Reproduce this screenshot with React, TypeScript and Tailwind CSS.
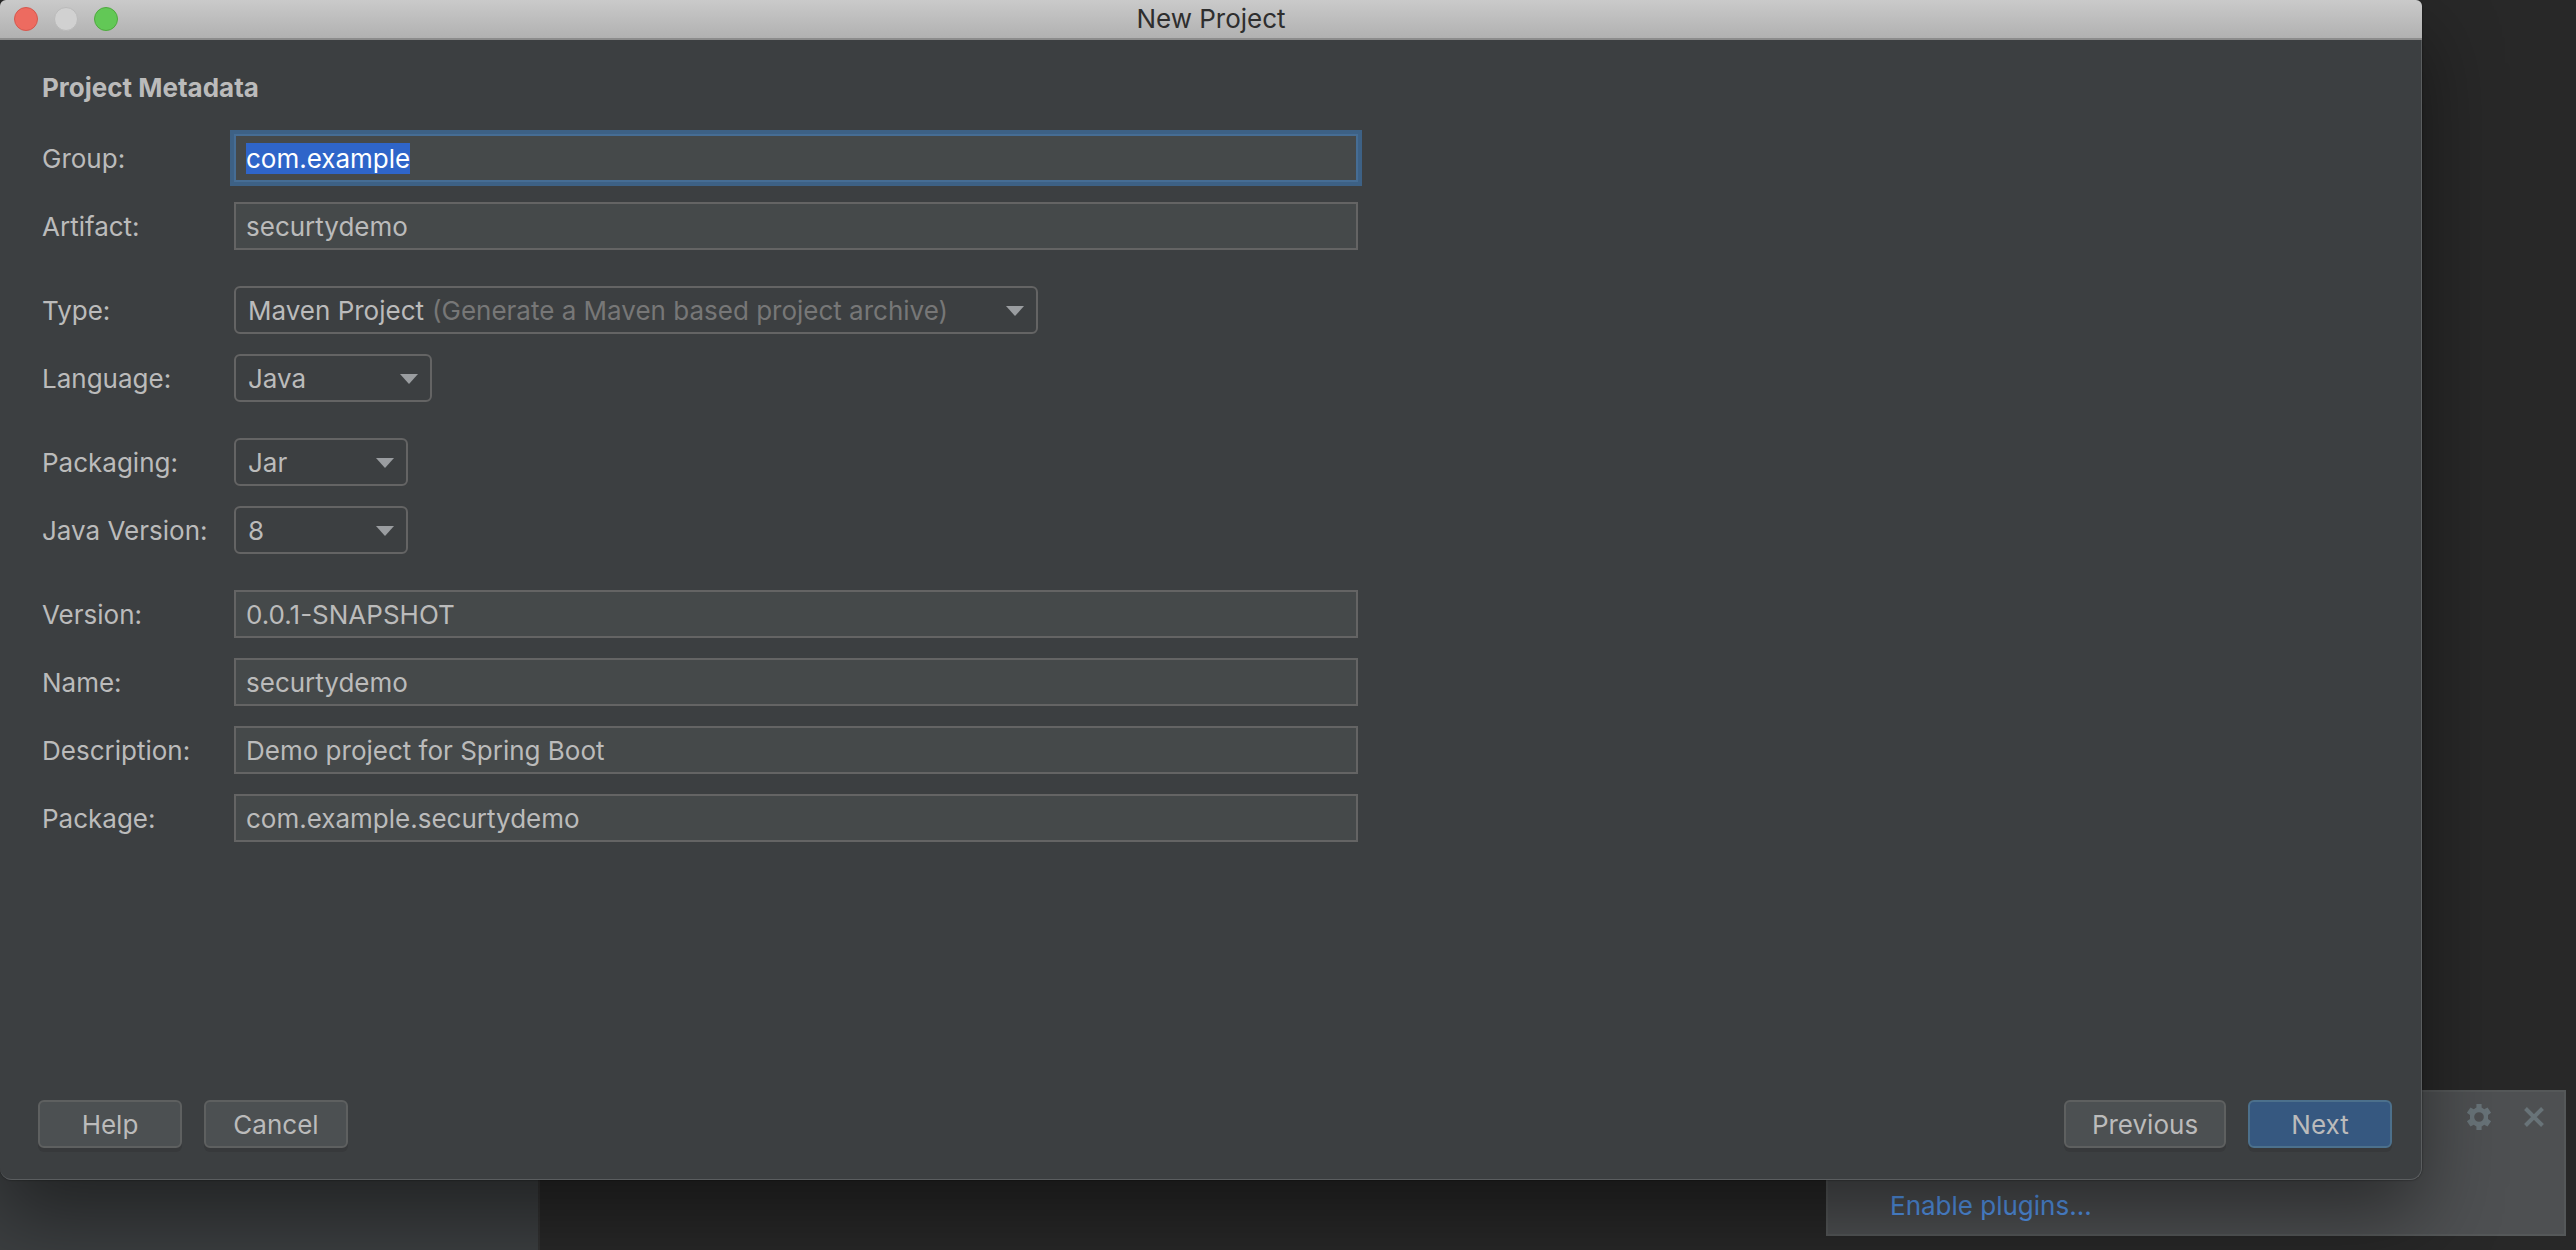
import { useEffect, useRef } from "react";
import type { ReactNode } from "react";

interface RowProps {
  id: string;
  label: string;
  children: ReactNode;
}

function Row({ id, label, children }: RowProps) {
  return (
    <div className="flex h-12 items-center">
      <label htmlFor={id} className="w-48 shrink-0 pt-0.5 whitespace-nowrap">
        {label}
      </label>
      {children}
    </div>
  );
}

interface TextRowProps {
  id: string;
  label: string;
  value: string;
}

function TextRow({ id, label, value }: TextRowProps) {
  return (
    <Row id={id} label={label}>
      <input
        id={id}
        type="text"
        defaultValue={value}
        className="h-12 min-w-0 flex-1 border-2 border-[#646464] bg-[#45494a] px-2.5 outline-none selection:bg-[#2f65ca]/99 selection:text-white focus:border-[#466d94] focus:ring-4 focus:ring-[#3d6185]"
      />
    </Row>
  );
}

interface SelectRowProps {
  id: string;
  label: string;
  value: string;
  /** Dimmed explanation after the value. */
  hint?: string;
  className: string;
}

function SelectRow({ id, label, value, hint, className }: SelectRowProps) {
  return (
    <Row id={id} label={label}>
      <div className={`grid items-center ${className}`}>
        <select
          id={id}
          className="col-start-1 row-start-1 h-12 w-full appearance-none rounded-md border-2 border-[#646464] bg-[#3c3f41] px-3 text-transparent outline-none"
        >
          <option>{value}</option>
        </select>
        <div
          aria-hidden="true"
          className="pointer-events-none col-start-1 row-start-1 flex items-center px-3.5 pt-0.5"
        >
          <span className="whitespace-nowrap">{value}</span>
          {hint && <span className="ml-2 whitespace-nowrap text-[#777777]">{hint}</span>}
          <svg viewBox="0 0 18 10" className="ml-auto h-2.5 w-[18px]" fill="#9a9da0">
            <path d="M0 0h18L9 10z" />
          </svg>
        </div>
      </div>
    </Row>
  );
}

interface DialogButtonProps {
  children: ReactNode;
  primary?: boolean;
  wide?: boolean;
}

function DialogButton({ children, primary, wide }: DialogButtonProps) {
  return (
    <button
      type="button"
      className={`h-12 rounded-md border-2 pt-0.5 shadow-[0_4px_0_#37393b] ${
        primary ? "border-[#4c708c] bg-[#365880]" : "border-[#5e6060] bg-[#4c5052]"
      } ${wide ? "w-[162px]" : "w-36"}`}
    >
      {children}
    </button>
  );
}

function TitleBar() {
  return (
    <header className="grid h-10 grid-cols-[1fr_auto_1fr] items-center rounded-t-md border-b-2 border-[#8c8c8c] bg-linear-to-b from-[#cacaca] to-[#b1b1b1] px-3.5">
      <div className="flex gap-4">
        <button type="button" aria-label="Close" className="size-6 rounded-full border border-[#d5584e] bg-[#ed6b60]" />
        <button type="button" aria-label="Minimize" className="size-6 rounded-full border border-[#bababa] bg-[#d1d1d1]" />
        <button type="button" aria-label="Zoom" className="size-6 rounded-full border border-[#4fa93f] bg-[#62c856]" />
      </div>
      <h1 className="text-[#2e2e2e]">New Project</h1>
    </header>
  );
}

function PluginNotice() {
  return (
    <aside className="absolute right-2.5 bottom-3.5 flex h-[146px] w-[740px] flex-col justify-between border-2 border-[#555859] bg-[#4e5052] pt-3 pr-5 pb-3 pl-[62px]">
      <div className="flex items-center justify-end gap-8">
        <button type="button" aria-label="Notification settings">
          <svg viewBox="0 0 26 26" className="size-[26px]" fill="#687378" fillRule="evenodd">
            <path d="M10.4 0h5.2v3.6l2.7 1.6 3.2-1.7 3.6 5.3L22 11v4l3.1 2.2-3.6 5.3-3.2-1.7-2.7 1.6V26h-5.2v-3.6l-2.700-1.6-3.2 1.7-3.6-5.300L4 15v-4L.9 8.800l3.6-5.300 3.2 1.700 2.700-1.600zM13 8.200a4.800 4.800 0 1 0 0 9.600 4.800 4.800 0 0 0 0-9.600z" />
          </svg>
        </button>
        <button type="button" aria-label="Close notification">
          <svg viewBox="0 0 20 20" className="size-5" stroke="#687378" strokeWidth="4">
            <path d="M1.500 1.500l17 17M18.500 1.500l-17 17" />
          </svg>
        </button>
      </div>
      <a href="#plugins" className="self-start leading-8 text-[#589df6]">
        Enable plugins...
      </a>
    </aside>
  );
}

export default function App() {
  const form = useRef<HTMLFormElement>(null);

  // the group id is ready to be typed over when the dialog opens
  useEffect(() => {
    const first = form.current?.querySelector("input");
    first?.focus();
    first?.select();
  }, []);

  return (
    <div className="relative flex min-h-screen flex-col overflow-hidden bg-[#282828] font-['Inter',sans-serif] text-[26px] leading-8 text-[#bbbbbb]">
      <div className="absolute bottom-0 left-0 h-[400px] w-[540px] border-r-2 border-[#323232] bg-[#3c3f41]" />
      <PluginNotice />

      <main className="relative mr-[154px] mb-[70px] flex flex-1 flex-col rounded-lg rounded-b-xl bg-[#3c3f41] shadow-[0_36px_80px_rgba(0,0,0,0.45),0_0_2px_rgba(0,0,0,0.6)]">
        <TitleBar />
        <form
          ref={form}
          className="flex flex-1 flex-col rounded-b-xl border-r border-b border-[#5a5d5f]"
          onSubmit={(e) => e.preventDefault()}
        >
          <div className="flex w-full max-w-[1358px] flex-col pt-8 pl-[42px]">
            <h2 className="mb-[30px] font-bold">Project Metadata</h2>
            <div className="flex flex-col gap-9">
              <div className="flex flex-col gap-5">
                <TextRow id="group" label="Group:" value="com.example" />
                <TextRow id="artifact" label="Artifact:" value="securtydemo" />
              </div>
              <div className="flex flex-col gap-5">
                <SelectRow
                  id="type"
                  label="Type:"
                  value="Maven Project"
                  hint="(Generate a Maven based project archive)"
                  className="w-[804px]"
                />
                <SelectRow id="language" label="Language:" value="Java" className="w-[198px]" />
              </div>
              <div className="flex flex-col gap-5">
                <SelectRow id="packaging" label="Packaging:" value="Jar" className="w-[174px]" />
                <SelectRow id="java-version" label="Java Version:" value="8" className="w-[174px]" />
              </div>
              <div className="flex flex-col gap-5">
                <TextRow id="version" label="Version:" value="0.0.1-SNAPSHOT" />
                <TextRow id="name" label="Name:" value="securtydemo" />
                <TextRow id="description" label="Description:" value="Demo project for Spring Boot" />
                <TextRow id="package" label="Package:" value="com.example.securtydemo" />
              </div>
            </div>
          </div>

          <footer className="mt-auto flex gap-[22px] pr-[29px] pb-[31px] pl-[38px]">
            <DialogButton>Help</DialogButton>
            <DialogButton>Cancel</DialogButton>
            <div className="flex-1" />
            <DialogButton wide>Previous</DialogButton>
            <DialogButton primary>Next</DialogButton>
          </footer>
        </form>
      </main>
    </div>
  );
}
